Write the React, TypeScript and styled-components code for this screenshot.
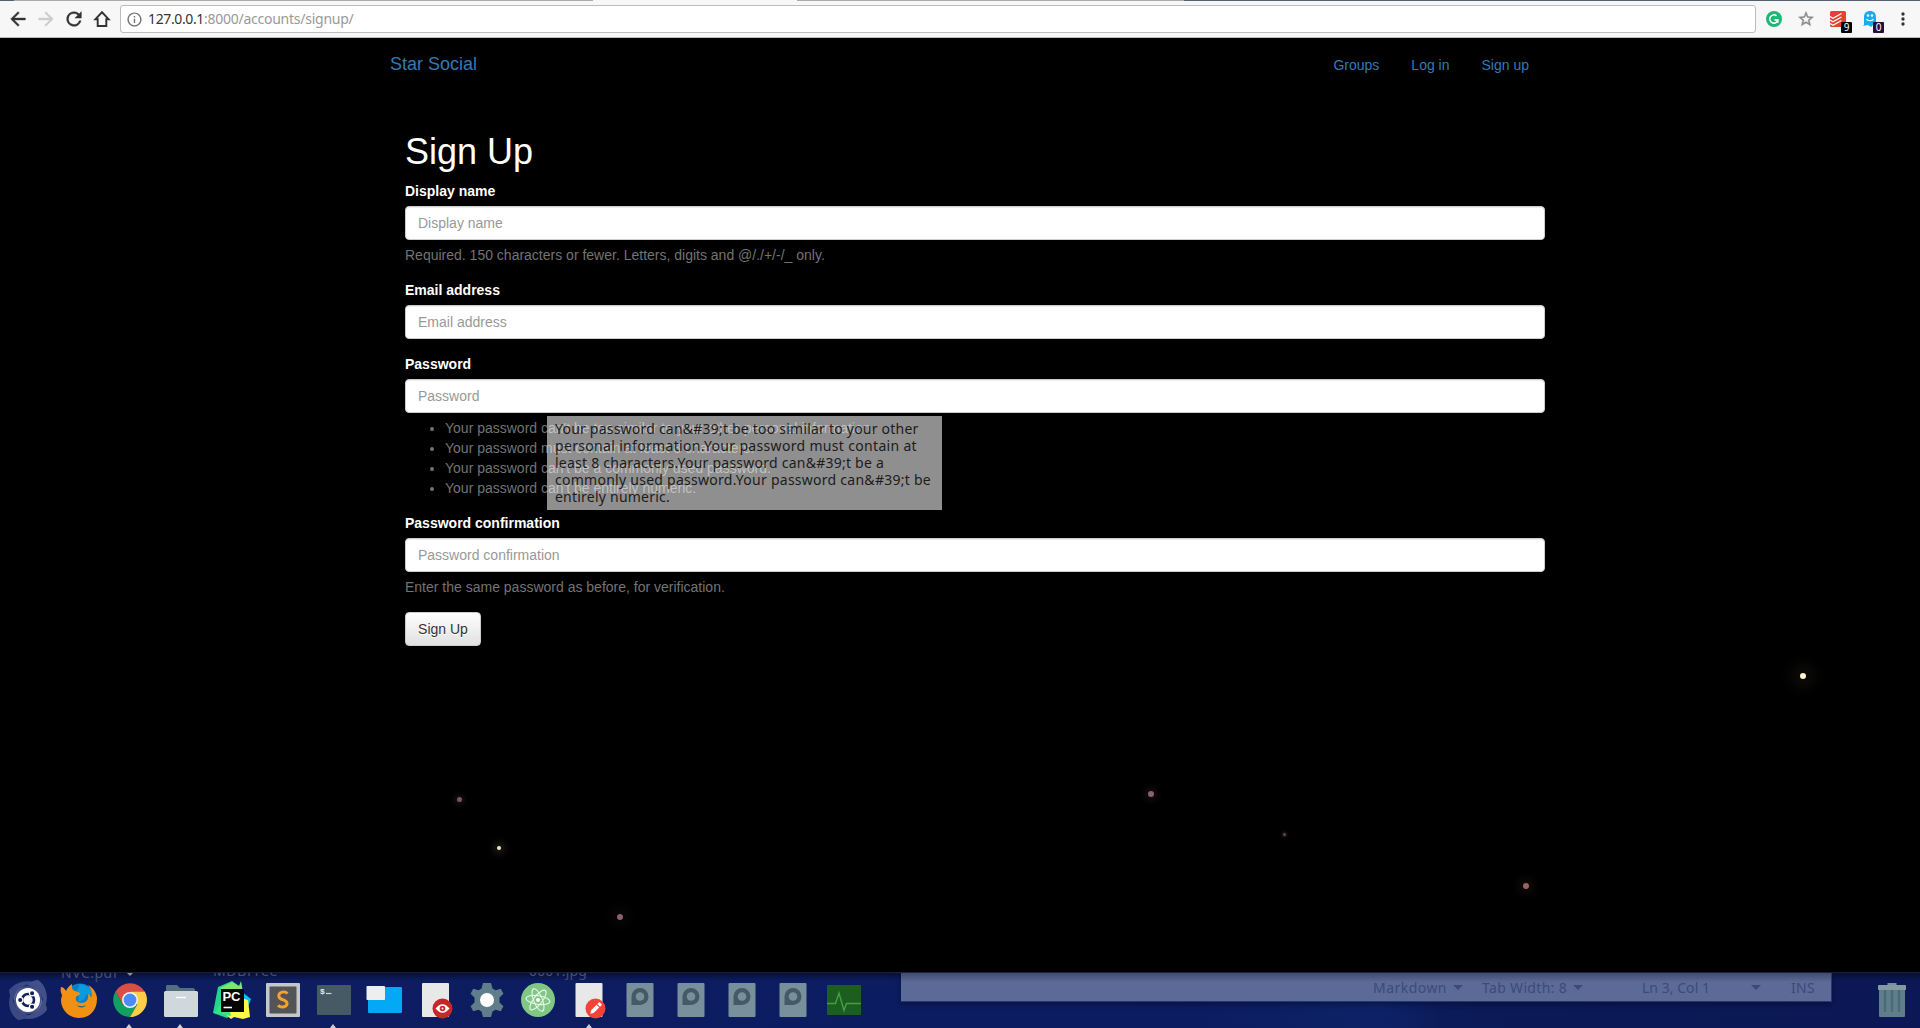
import React, { useLayoutEffect, useRef, useState } from 'react';
import styled, { createGlobalStyle } from 'styled-components';

const GlobalStyle = createGlobalStyle`
  * { box-sizing: border-box; }
  body {
    margin: 0;
    background: #000;
    font-family: "Liberation Sans", Arial, sans-serif;
    font-size: 14px;
    line-height: 20px;
  }
`;

const uiFont = '"Noto Sans", "Open Sans", sans-serif';

/* ---------- text that keeps a fixed advance width ---------- */

const Run = styled.span<{ $color?: string }>`
  white-space: pre;
  color: ${(p) => p.$color || 'inherit'};
`;

function FitText({ width, color, children }: { width: number; color?: string; children: string }) {
  const ref = useRef<HTMLSpanElement>(null);
  const [spacing, setSpacing] = useState(0);
  useLayoutEffect(() => {
    if (ref.current) {
      const natural = ref.current.getBoundingClientRect().width;
      setSpacing((width - natural) / children.length);
    }
  }, [width, children]);
  return (
    <Run ref={ref} $color={color} style={{ letterSpacing: `${spacing}px` }}>
      {children}
    </Run>
  );
}

/* ---------- browser chrome ---------- */

const Screen = styled.div`
  display: flex;
  flex-direction: column;
  width: 1920px;
  height: 1028px;
  overflow: hidden;
`;

const TabStrip = styled.div`
  display: flex;
  flex: none;
  height: 1px;
  background: #56616f;
`;

const TabEdge = styled.div<{ $width: number; $color: string }>`
  width: ${(p) => p.$width}px;
  background: ${(p) => p.$color};
`;

const Toolbar = styled.div`
  display: flex;
  flex: none;
  align-items: center;
  height: 37px;
  padding-left: 7px;
  background: #f7f7f7;
  border-bottom: 1px solid #bcbcbc;
`;

const NavButtons = styled.div`
  display: flex;
  flex: none;
  gap: 6px;
  width: 113px;
  svg { display: block; }
`;

const AddressBar = styled.div`
  display: flex;
  flex: none;
  align-items: center;
  gap: 5px;
  width: 1636px;
  height: 28px;
  padding: 0 5px;
  border: 1px solid #bdbdbd;
  border-radius: 3px;
  background: #fff;
  font: 14px/20px ${uiFont};
  svg { display: block; flex: none; }
`;

const Extensions = styled.div`
  display: flex;
  flex: none;
  align-items: center;
  padding-left: 6px;
`;

const Extension = styled.div<{ $width?: number }>`
  position: relative;
  display: flex;
  flex: none;
  justify-content: center;
  width: ${(p) => p.$width || 32}px;
  svg { display: block; }
`;

const Badge = styled.span<{ $color: string }>`
  position: absolute;
  left: calc(50% + 3px);
  top: 11px;
  width: 11px;
  height: 11px;
  border-radius: 1px;
  background: ${(p) => p.$color};
  color: #fff;
  font: 10px/11px ${uiFont};
  text-align: center;
`;

/* ---------- site ---------- */

const Site = styled.main`
  position: relative;
  flex: none;
  height: 934px;
  background: #000;
`;

const Navbar = styled.nav`
  display: flex;
  justify-content: space-between;
  width: 1170px;
  height: 50px;
  margin: 0 auto;
  padding: 0 16px 0 15px;
`;

const Brand = styled.a`
  padding-top: 16px;
  color: #337ab7;
  font-size: 18px;
`;

const NavLinks = styled.div`
  display: flex;
  gap: 32px;
  padding-top: 17px;
`;

const NavLink = styled.a`
  color: #337ab7;
`;

const FormArea = styled.form`
  width: 1140px;
  margin-left: 405px;
  padding-top: 44px;
`;

const Title = styled.h1`
  margin: 0 0 9px;
  color: #fff;
  font-size: 36px;
  font-weight: 400;
  line-height: 40px;
`;

const Field = styled.div`
  display: flex;
  flex-direction: column;
  gap: 5px;
  margin-bottom: 15px;
`;

const Label = styled.label`
  color: #fff;
  font-weight: 700;
`;

const Input = styled.input`
  display: block;
  width: 100%;
  height: 34px;
  padding: 6px 12px;
  border: 1px solid #ccc;
  border-radius: 4px;
  background: #fff;
  box-shadow: inset 0 1px 1px rgba(0, 0, 0, 0.075);
  color: #555;
  font: 14px/20px "Liberation Sans", Arial, sans-serif;
  &::placeholder { color: #999; opacity: 1; }
`;

const Help = styled.p`
  margin: 0;
  color: #737373;
`;

const HelpList = styled.ul`
  margin: 0;
  padding-left: 40px;
  color: #737373;
`;

const Submit = styled.button`
  display: block;
  height: 34px;
  width: 76px;
  padding: 0;
  border: 1px solid #ccc;
  border-radius: 4px;
  background: linear-gradient(#fff, #e0e0e0);
  color: #333;
  font: 14px/20px "Liberation Sans", Arial, sans-serif;
  text-shadow: 0 1px 0 #fff;
`;

const Tooltip = styled.div`
  position: absolute;
  left: 547px;
  top: 378px;
  display: flex;
  flex-direction: column;
  align-items: flex-start;
  width: 395px;
  height: 94px;
  padding: 4px 8px;
  background: rgba(255, 255, 255, 0.56);
  box-shadow: 0 0 6px rgba(0, 0, 0, 0.12);
  color: #1c1c1c;
  font: 14px/17px ${uiFont};
`;

const Star = styled.i<{ $x: number; $y: number; $size: number; $color: string; $glow: number }>`
  position: absolute;
  left: ${(p) => p.$x - p.$size / 2}px;
  top: ${(p) => p.$y - 38 - p.$size / 2}px;
  width: ${(p) => p.$size}px;
  height: ${(p) => p.$size}px;
  border-radius: 50%;
  background: ${(p) => p.$color};
  box-shadow: 0 0 ${(p) => p.$glow}px 1px ${(p) => p.$color}70;
`;

/* ---------- desktop dock ---------- */

const Dock = styled.footer`
  position: relative;
  display: flex;
  flex: none;
  justify-content: space-between;
  height: 56px;
  padding: 0 2px;
  border-top: 1px solid #1d2233;
  background:
    linear-gradient(rgba(4, 8, 32, 0.6), rgba(4, 8, 32, 0) 8px),
    linear-gradient(90deg, #0d1d60 0, #0c1c60 1200px, #0d2266 1380px, #0b1a58 1450px, #0b1855);
  overflow: hidden;
`;

const DockItems = styled.div`
  display: flex;
`;

const DockItem = styled.div<{ $running?: boolean }>`
  position: relative;
  display: flex;
  justify-content: center;
  width: 51.05px;
  padding-top: 7px;
  svg { display: block; overflow: visible; }
  &::after {
    content: "";
    display: ${(p) => (p.$running ? 'block' : 'none')};
    position: absolute;
    bottom: 0;
    left: 22px;
    border: solid transparent;
    border-width: 0 3.5px 4px;
    border-bottom-color: #cfcfd2;
  }
`;

const DesktopLabel = styled.span<{ $x: number; $y: number }>`
  position: absolute;
  left: ${(p) => p.$x}px;
  top: ${(p) => p.$y}px;
  color: #43507c;
  font: 14px/20px ${uiFont};
`;

const DownMark = styled.i<{ $x: number }>`
  position: absolute;
  left: ${(p) => p.$x}px;
  top: 0;
  border: solid transparent;
  border-width: 3.5px 3.5px 0;
  border-top-color: #8b8e97;
`;

const EditorStatus = styled.div`
  position: absolute;
  left: 901px;
  top: 0;
  display: flex;
  align-items: center;
  width: 931px;
  height: 29px;
  padding: 1px 0 0 472px;
  background: linear-gradient(#3f4b71, #5b6a96 9px);
  border: solid #24386f;
  border-width: 0 1px 1px 0;
  box-shadow: 0 2px 6px rgba(0, 0, 20, 0.4);
  color: #3c4a79;
  font: 14px/20px ${uiFont};
`;

const StatusCell = styled.span<{ $width: number }>`
  display: flex;
  align-items: center;
  gap: 6px;
  width: ${(p) => p.$width}px;
`;

const Caret = styled.i<{ $push?: boolean }>`
  border: solid transparent;
  border-width: 5px 5px 0;
  border-top-color: #3c4a79;
  margin-left: ${(p) => (p.$push ? 35 : 0)}px;
`;

/* ---------- drawings ---------- */

const Svg = ({ s = 22, box = '0 0 24 24', fill = '#333', children }: any) => (
  <svg width={s} height={s} viewBox={box} fill={fill}>{children}</svg>
);

const IconBox = ({ children }: any) => (
  <svg width="40" height="40" viewBox="-20 -20 40 40" fill="none">{children}</svg>
);

const Launcher = () => (
  <IconBox>
    <g opacity=".5">
      <path d="M-19-10C-12-19 2-22 13-15-2-19-13-11-13 1-17-2-19-6-19-10z" fill="#6875a8" />
      <path d="M10-20c9 6 12 20 5 30 2-14-4-23-16-25 3-3 7-5 11-5z" fill="#7984b1" />
      <path d="M19 10C12 19-2 22-13 15 2 19 13 11 13-1c4 3 6 7 6 11z" fill="#7984b1" />
      <path d="M-10 20c-9-6-12-20-5-30-2 14 4 23 16 25-3 3-7 5-11 5z" fill="#6875a8" />
    </g>
    <circle r="14" fill="#8791b8" opacity=".45" />
    <circle r="12" fill="#fff" />
    <circle r="6" stroke="#12205b" strokeWidth="2.6" />
    <g stroke="#fff" strokeWidth="1.3" fill="#12205b">
      <circle cx="-7.8" r="2.7" />
      <circle cx="4.1" cy="-6.8" r="2.7" />
      <circle cx="4.1" cy="6.8" r="2.7" />
    </g>
  </IconBox>
);

const Firefox = () => (
  <IconBox>
    <circle cx="1" cy="-1" r="15.5" fill="#0a7fc4" />
    <path d="M0-16c6 0 11 3 13 8 0 3-4 4-6 2 0 5-5 8-9 8 5-4 0-8-2-9 2-2 4-5 4-9z" fill="#0a9bdc" />
    <path d="M-18-13c2 0 4 2 5 4 1-3 3-5 6-7 0 4 0 6 3 7l5 2c1 1-3 3-4 4-1 3 1 6 5 6 5 0 8-3 7-9 3 1 3 4 3 4 2-4 0-10-3-13 6 3 9 9 9 14C18 11 10 18 0 18S-18 10-18 0c0-2 1-3 1-5-1-2-2-5-1-8z" fill="#f29111" />
    <path d="M-4 3c2 4 8 4 11 2-2 3-7 4-11-2z" fill="#0c5f96" />
  </IconBox>
);

const Chrome = () => (
  <IconBox>
    <path d="M-14.5-8.5A17 17 0 0 1 14.7-8.5H0L-7.4 4.2z" fill="#d94f44" />
    <path d="M-14.5-8.5A17 17 0 0 0 0 17L7.4 4.3H-7.4z" fill="#12a05f" />
    <path d="M14.7-8.5A17 17 0 0 1 0 17L7.4 4.3 0-8.5z" fill="#ffcd46" />
    <circle r="8" fill="#f1f1f1" />
    <circle r="6.4" fill="#4b8bf4" />
  </IconBox>
);

const Files = () => (
  <IconBox>
    <path d="M-15-13.5c0-1 .6-1.5 1.5-1.5H-4l3 3h13c1 0 2 .7 2 2v4h-29z" fill="#546e7a" />
    <rect x="-17" y="-9" width="34" height="26" rx="1.5" fill="#cfd8dc" />
    <path d="M-5-2.5H5" stroke="#fff" strokeWidth="1.4" />
  </IconBox>
);

const PyCharm = () => (
  <IconBox>
    <path d="M-19 13l5-26 14-6 7 5 3 24-15 8z" fill="#21d789" />
    <path d="M-12-12L0-18 7-14 9-19l2 11-8 9z" fill="#7fe86a" />
    <path d="M10-8l9 7-3 8-7 2z" fill="#07c3f2" />
    <path d="M-8 13l20-14 4 1 2 17-7 2-9-2-3 2z" fill="#fcf84a" />
    <path d="M-18 13l12-17 5 20z" fill="#3fdc8a" />
    <rect x="-11" y="-11" width="23" height="23" fill="#050505" />
    <text x="-9.6" y="0.500" fill="#fff" fontFamily="Liberation Sans, sans-serif" fontWeight="700" fontSize="13" textLength="18">PC</text>
    <path d="M-8.5 7.5H0" stroke="#fff" strokeWidth="1.6" />
  </IconBox>
);

const Sublime = () => (
  <IconBox>
    <rect x="-17" y="-17" width="34" height="34" rx="1" fill="#c5c6c8" />
    <rect x="-13.5" y="-13.5" width="27" height="27" rx="1" fill="#535455" />
    <path d="M4.5-6.500C3-8 0-8.500-2-7.500c-3 1.400-2.800 5.300 0 6.500l3 1.200c4 1.600 4 5.500 0 6.600-2 .5-4.400 0-6-1.500" stroke="#f9a02f" strokeWidth="3" />
  </IconBox>
);

const Terminal = () => (
  <IconBox>
    <rect x="-17" y="-15" width="34" height="30" rx="1" fill="#455a64" />
    <text x="-14" y="-6" fill="#e7edef" fontFamily="Liberation Mono, monospace" fontWeight="700" fontSize="8">$</text>
    <path d="M-8-6.500h5.500" stroke="#cfd8dc" strokeWidth="1.2" />
  </IconBox>
);

const Workspaces = () => (
  <IconBox>
    <rect x="-17" y="-13" width="34" height="26" rx="1" fill="#03a9f4" />
    <rect x="-18.500" y="-14" width="18.500" height="14" rx=".8" fill="#eee" />
  </IconBox>
);

const Viewer = () => (
  <IconBox>
    <rect x="-14" y="-17" width="27" height="34" rx="1" fill="#e8e8e9" />
    <circle cx="6.500" cy="8.500" r="10" fill="#c62828" />
    <path d="M-.5 8.500Q6.500 0 13.500 8.500 6.500 17-.5 8.500z" fill="#fff" />
    <circle cx="6.500" cy="8.500" r="2.800" fill="#c62828" />
    <circle cx="6.500" cy="8.500" r="1" fill="#fff" />
  </IconBox>
);

const Settings = () => (
  <IconBox>
    <path d="M-4-17H4l1.500 5.500 3 1.700 5.300-1.500 2.600 5-3.900 3.800v5l3.900 3.800-2.600 5-5.300-1.500-3 1.700L4 17H-4l-1.500-5.500-3-1.700-5.300 1.500-2.600-5 3.900-3.800v-5l-3.900-3.800 2.600-5 5.300 1.500 3-1.700z" fill="#607d8b" />
    <circle r="7" fill="#fff" />
  </IconBox>
);

const Atom = () => (
  <IconBox>
    <circle r="17" fill="#81c784" />
    <g stroke="#e8f5e9" strokeWidth="1.1">
      <ellipse rx="12" ry="4.300" transform="rotate(8)" />
      <ellipse rx="12" ry="4.300" transform="rotate(68)" />
      <ellipse rx="12" ry="4.300" transform="rotate(128)" />
    </g>
    <circle r="2" fill="#fff" />
  </IconBox>
);

const Editor = () => (
  <IconBox>
    <rect x="-13.500" y="-17" width="27" height="34" rx="1" fill="#e8e8e9" />
    <circle cx="6.500" cy="8.500" r="10" fill="#f44336" />
    <path d="M1.300 13.700l.6-3.300 5.600-5.600 2.700 2.700-5.600 5.600zM8.300 4l1.500-1.500c.4-.4.8-.4 1.200 0l1.500 1.500c.4.4.4.8 0 1.200L11 6.700z" fill="#fff" />
  </IconBox>
);

const Drive = () => (
  <IconBox>
    <rect x="-13.500" y="-17" width="27" height="34" rx="1" fill="#78909c" />
    <path d="M-8.500 5V-3.500A8.500 8.500 0 1 1 0 5z" fill="#455a64" />
    <circle cx="0" cy="-3.500" r="4.300" fill="#78909c" />
  </IconBox>
);

const Monitor = () => (
  <IconBox>
    <rect x="-17" y="-15" width="34" height="30" rx="1" fill="#1b5e20" />
    <path d="M-17 3.500H-8.500L-5-7 0 10.500 2.500 3.500H17" stroke="#43a047" strokeWidth="1.400" />
  </IconBox>
);

const Trash = () => (
  <IconBox>
    <rect x="-4.500" y="-17" width="9" height="3" fill="#78909c" />
    <rect x="-13" y="-11" width="26" height="28" rx="1" fill="#607d8b" />
    <rect x="-14" y="-15" width="28" height="5" rx=".6" fill="#8499a3" />
    <path d="M-7-10v22M0-10v22M7-10v22" stroke="#4b6a78" strokeWidth="2.400" />
  </IconBox>
);

const dockApps: Array<[React.ComponentType, boolean]> = [
  [Launcher, false], [Firefox, false], [Chrome, true], [Files, true], [PyCharm, false],
  [Sublime, false], [Terminal, true], [Workspaces, false], [Viewer, false], [Settings, false],
  [Atom, false], [Editor, true], [Drive, false], [Drive, false], [Drive, false], [Drive, false],
  [Monitor, false],
];

const stars = [
  { x: 459.2, y: 799.5, size: 5, color: '#795463', glow: 6 },
  { x: 498.5, y: 848, size: 4, color: '#f3e8c2', glow: 8 },
  { x: 620, y: 916.5, size: 6, color: '#8a6072', glow: 16 },
  { x: 1151, y: 794, size: 6, color: '#8a6072', glow: 10 },
  { x: 1284.5, y: 834, size: 3, color: '#59494f', glow: 3 },
  { x: 1526, y: 886, size: 6, color: '#94665f', glow: 12 },
  { x: 1802.6, y: 676, size: 6, color: '#fff4d0', glow: 18 },
];

const tooltipLines: Array<[string, number]> = [
  ['Your password can&#39;t be too similar to your other', 363.5],
  ['personal information.Your password must contain at', 362],
  ['least 8 characters.Your password can&#39;t be a', 329],
  ['commonly used password.Your password can&#39;t be', 376],
  ['entirely numeric.', 115],
];

export default function App() {
  return (
    <>
      <GlobalStyle />
      <Screen>
        <TabStrip>
          <TabEdge $width={14} $color="#56616f" />
          <TabEdge $width={579} $color="#aaa" />
          <TabEdge $width={204} $color="#f7f7f7" />
          <TabEdge $width={387} $color="#aaa" />
        </TabStrip>
        <Toolbar>
          <NavButtons>
            <Svg><path d="M20 11H7.830l5.590-5.590L12 4l-8 8 8 8 1.410-1.410L7.830 13H20v-2z" stroke="#333" strokeWidth=".5" /></Svg>
            <Svg fill="#ccc"><path d="M12 4l-1.410 1.410L16.170 11H4v2h12.170l-5.580 5.590L12 20l8-8z" stroke="#ccc" strokeWidth=".5" /></Svg>
            <Svg><path d="M17.650 6.350A7.950 7.950 0 0 0 12 4a8 8 0 1 0 7.730 10h-2.080A6 6 0 1 1 12 6c1.660 0 3.140.690 4.220 1.780L13 11h7V4l-2.350 2.350z" stroke="#333" strokeWidth=".5" /></Svg>
            <Svg><path d="M12 4.600L4.800 12.200H7.300V19.700H16.700V12.200H19.200z" fill="none" stroke="#333" strokeWidth="2.100" /></Svg>
          </NavButtons>
          <AddressBar>
            <Svg s={17} fill="#757575"><path d="M11 17h2v-6h-2v6zm1-15C6.480 2 2 6.480 2 12s4.480 10 10 10 10-4.480 10-10S17.520 2 12 2zm0 18c-4.410 0-8-3.590-8-8s3.590-8 8-8 8 3.590 8 8-3.590 8-8 8zM11 9h2V7h-2v2z" /></Svg>
            <span>
              <FitText width={56} color="#333">127.0.0.1</FitText>
              <FitText width={149.500} color="#999">:8000/accounts/signup/</FitText>
            </span>
          </AddressBar>
          <Extensions>
            <Extension $width={24}>
              <Svg s={16}>
                <circle cx="12" cy="12" r="12" fill="#1cb877" />
                <path d="M15.800 7.200A6.200 6.200 0 1 0 17.500 14.500M12.800 13.300H17.700V17.500" fill="none" stroke="#fff" strokeWidth="2.300" />
              </Svg>
            </Extension>
            <Extension $width={40}>
              <Svg s={18} fill="#8a8a8a"><path d="M22 9.240l-7.190-.620L12 2 9.190 8.630 2 9.240l5.460 4.730L5.820 21 12 17.270 18.180 21l-1.630-7.030L22 9.240zM12 15.400l-3.760 2.270 1-4.280-3.320-2.880 4.380-.380L12 6.100l1.710 4.040 4.380.380-3.320 2.880 1 4.280L12 15.400z" stroke="#8a8a8a" strokeWidth=".6" /></Svg>
            </Extension>
            <Extension $width={24}>
              <Svg s={16} box="0 0 16 16">
                <rect width="16" height="16" rx="1.500" fill="#e44332" />
                <path d="M0 5.500l3 1.800L11.500 2.500M0 9l3 1.800L11.500 6M0 12.500l3 1.800L11.500 9.500" fill="none" stroke="#fff" strokeWidth="1.200" />
              </Svg>
              <Badge $color="#000">9</Badge>
            </Extension>
            <Extension $width={40}>
              <Svg s={16} box="0 0 16 16">
                <path d="M2 14V6c0-4 2.500-6 6-6s6 2 6 6v9l-2.500-1.500L9 16l-3-2-5.500 1z" fill="#14aef0" />
                <circle cx="6" cy="4.500" r="1.200" fill="#fff" />
                <circle cx="10" cy="4.500" r="1.200" fill="#fff" />
                <path d="M4.500 8c1 2.300 6 2.300 7 0" fill="none" stroke="#fff" strokeWidth="1.100" />
              </Svg>
              <Badge $color="#2b0b3a">0</Badge>
            </Extension>
            <Extension $width={25}>
              <Svg s={20}><circle cx="12" cy="6" r="2" /><circle cx="12" cy="12" r="2" /><circle cx="12" cy="18" r="2" /></Svg>
            </Extension>
          </Extensions>
        </Toolbar>

        <Site>
          <Navbar>
            <Brand>Star Social</Brand>
            <NavLinks>
              <NavLink>Groups</NavLink>
              <NavLink>Log in</NavLink>
              <NavLink>Sign up</NavLink>
            </NavLinks>
          </Navbar>
          <FormArea>
            <Title>Sign Up</Title>
            <Field>
              <Label>Display name</Label>
              <Input placeholder="Display name" />
              <Help>Required. 150 characters or fewer. Letters, digits and @/./+/-/_ only.</Help>
            </Field>
            <Field>
              <Label>Email address</Label>
              <Input placeholder="Email address" />
            </Field>
            <Field>
              <Label>Password</Label>
              <Input placeholder="Password" />
              <HelpList>
                <li>Your password can't be too similar to your other personal information.</li>
                <li>Your password must contain at least 8 characters.</li>
                <li>Your password can't be a commonly used password.</li>
                <li>Your password can't be entirely numeric.</li>
              </HelpList>
            </Field>
            <Field>
              <Label>Password confirmation</Label>
              <Input placeholder="Password confirmation" />
              <Help>Enter the same password as before, for verification.</Help>
            </Field>
            <Submit type="button">Sign Up</Submit>
          </FormArea>
          {stars.map((s) => (
            <Star key={s.x} $x={s.x} $y={s.y} $size={s.size} $color={s.color} $glow={s.glow} />
          ))}
          <Tooltip>
            {tooltipLines.map(([text, width]) => (
              <FitText key={text} width={width}>{text}</FitText>
            ))}
          </Tooltip>
        </Site>

        <Dock>
          <DesktopLabel $x={61} $y={-10}><FitText width={57}>NVC.pdf</FitText></DesktopLabel>
          <DesktopLabel $x={213} $y={-12}><FitText width={65}>MDBFree</FitText></DesktopLabel>
          <DesktopLabel $x={529} $y={-12}><FitText width={58}>0001.jpg</FitText></DesktopLabel>
          <DownMark $x={126.500} />
          <EditorStatus>
            <StatusCell $width={109}><FitText width={74}>Markdown</FitText><Caret /></StatusCell>
            <StatusCell $width={160}><FitText width={85}>Tab Width: 8</FitText><Caret /></StatusCell>
            <StatusCell $width={149}><FitText width={68}>Ln 3, Col 1</FitText><Caret $push /></StatusCell>
            <FitText width={24}>INS</FitText>
          </EditorStatus>
          <DockItems>
            {dockApps.map(([Icon, running], i) => (
              <DockItem key={i} $running={running}><Icon /></DockItem>
            ))}
          </DockItems>
          <DockItem><Trash /></DockItem>
        </Dock>
      </Screen>
    </>
  );
}
